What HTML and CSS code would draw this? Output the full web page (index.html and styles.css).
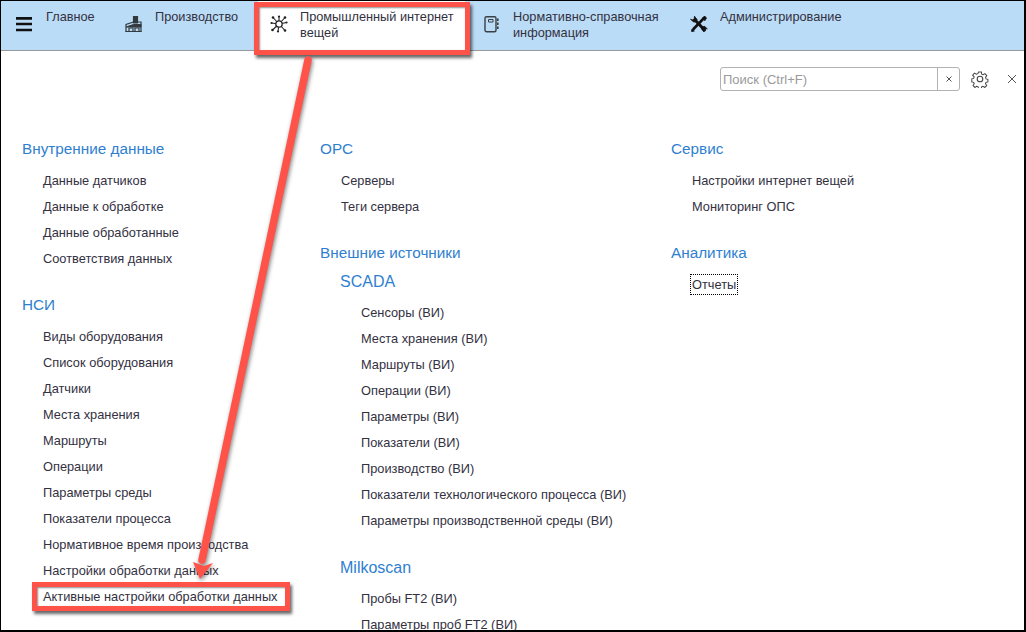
FILE: index.html
```html
<!DOCTYPE html>
<html lang="ru">
<head>
<meta charset="utf-8">
<title>Промышленный интернет вещей</title>
<link rel="stylesheet" href="styles.css">
</head>
<body>
<div class="frame">
  <header class="topbar">
    <div class="tab tab-main">
      <svg class="ico" width="18" height="18" viewBox="0 0 18 18"><path d="M0 3.300h16M0 9h16M0 15h16" stroke="#111" stroke-width="2.700"/></svg>
      <span class="tab-label">Главное</span>
    </div>
    <div class="tab tab-prod">
      <svg class="ico" width="18" height="18" viewBox="0 0 18 18" fill="none" stroke="#33393f" stroke-width="1.200"><path d="M9.500 8V1.500h4V8z" fill="#33393f"/><path d="M2 16.500V9.500l7.500-2.500h7.500v9.500z"/><path d="M2 12l7.500-2.500h7.500v2.500z" fill="#33393f" stroke-width="1"/><path d="M1.500 16.500h16M5 16.500v-3.500h4v3.500M11 16.500v-3.500h4v3.500"/></svg>
      <span class="tab-label">Производство</span>
    </div>
    <div class="tab tab-iot">
      <svg class="ico" width="18" height="18" viewBox="0 0 18 18" fill="none" stroke="#222" stroke-width="1.100"><path d="M9 9L3 2.500M9 9L9 1.500M9 9L15 2.500M9 9L1.500 8M9 9L16.500 7.500M9 9L2.500 15M9 9L8 16.500M9 9L15 15.500"/><circle cx="9" cy="9" r="3.200" fill="#fff" stroke-width="1.300"/><g fill="#222" stroke="none"><circle cx="3" cy="2.500" r="1.300"/><circle cx="9" cy="1.500" r="1.100"/><circle cx="15" cy="2.500" r="1.300"/><circle cx="1.500" cy="8" r="1.100"/><circle cx="16.500" cy="7.500" r="1.100"/><circle cx="2.500" cy="15" r="1.300"/><circle cx="8" cy="16.500" r="1.100"/><circle cx="15" cy="15.500" r="1.300"/></g></svg>
      <span class="tab-label">Промышленный интернет вещей</span>
    </div>
    <div class="tab tab-nsi">
      <svg class="ico" width="16" height="18" viewBox="0 0 16 18" fill="none" stroke="#3a3f45" stroke-width="1.400"><rect x="1" y="1.700" width="11" height="15" rx="1.500"/><path d="M4.500 4.500h4.500v2.500H4.500z" stroke-width="1"/><path d="M13.800 3.500v2.500M13.800 7.500v2.500M13.800 11.500v2.500" stroke-width="1.600"/></svg>
      <span class="tab-label">Нормативно-справочная информация</span>
    </div>
    <div class="tab tab-admin">
      <svg class="ico" width="18" height="18" viewBox="0 0 18 18" fill="#111" stroke="#111" stroke-linecap="round"><path d="M5 5L14.500 15" stroke-width="3" fill="none"/><path d="M14.500 2.500L3.500 14" stroke-width="2.600" fill="none"/><path d="M0.800 4.500L4 7.300L7.200 4.800L4.500 1.200L4.200 3.800L3 4.800z" stroke-width=".8"/><path d="M17 13.500L14 11L11.500 14L14 17L14.300 14.800L15.500 14z" stroke-width=".8"/><path d="M12.500 3L15 1.500L16.500 3L15 5.500z" stroke-width=".8"/><path d="M1.700 16.200L2 14L4 15.700z" stroke-width="1"/></svg>
      <span class="tab-label">Администрирование</span>
    </div>
  </header>
  <div class="tools">
    <div class="search">
      <span class="search-text">Поиск (Ctrl+F)</span>
      <span class="search-clear"><svg width="6" height="6" viewBox="0 0 6 6"><path d="M.5.500l5 5M5.500.500l-5 5" stroke="#555" stroke-width="1"/></svg></span>
    </div>
    <svg class="gear" width="18" height="18" viewBox="0 0 18 18" fill="none" stroke="#444" stroke-width="1.100"><circle cx="9" cy="9" r="2.800"/><path d="M7.500 1.500h3l.4 2.300 1.500.7 2-1.200 2 2.200-1.300 1.900.5 1.600 2 .5v2.800l-2 .5-.6 1.500 1.300 2-2.100 2-2-1.200-1.400.6-.4 2.300h-3l-.4-2.300-1.500-.6-2 1.200-2-2 1.200-2-.6-1.500-2-.5V9l2-.5.6-1.600L1 5l2-2.200 2 1.200 1.600-.7z" transform="translate(.7 .6) scale(.92)"/></svg>
    <svg class="close" width="16" height="16" viewBox="0 0 16 16"><path d="M4 4l8 8M12 4l-8 8" stroke="#555" stroke-width="1"/></svg>
  </div>
  <main class="columns">
    <section class="col col-1">
      <h2 class="sec">Внутренние данные</h2>
      <ul class="links">
        <li>Данные датчиков</li>
        <li>Данные к обработке</li>
        <li>Данные обработанные</li>
        <li>Соответствия данных</li>
      </ul>
      <h2 class="sec">НСИ</h2>
      <ul class="links">
        <li>Виды оборудования</li>
        <li>Список оборудования</li>
        <li>Датчики</li>
        <li>Места хранения</li>
        <li>Маршруты</li>
        <li>Операции</li>
        <li>Параметры среды</li>
        <li>Показатели процесса</li>
        <li>Нормативное время производства</li>
        <li>Настройки обработки данных</li>
        <li>Активные настройки обработки данных</li>
      </ul>
    </section>
    <section class="col col-2">
      <h2 class="sec">OPC</h2>
      <ul class="links">
        <li>Серверы</li>
        <li>Теги сервера</li>
      </ul>
      <h2 class="sec">Внешние источники</h2>
      <div class="sub">
        <h3 class="sec sec-sub">SCADA</h3>
        <ul class="links">
          <li>Сенсоры (ВИ)</li>
          <li>Места хранения (ВИ)</li>
          <li>Маршруты (ВИ)</li>
          <li>Операции (ВИ)</li>
          <li>Параметры (ВИ)</li>
          <li>Показатели (ВИ)</li>
          <li>Производство (ВИ)</li>
          <li>Показатели технологического процесса (ВИ)</li>
          <li>Параметры производственной среды (ВИ)</li>
        </ul>
        <h3 class="sec sec-sub">Milkoscan</h3>
        <ul class="links">
          <li>Пробы FT2 (ВИ)</li>
          <li>Параметры проб FT2 (ВИ)</li>
        </ul>
      </div>
    </section>
    <section class="col col-3">
      <h2 class="sec">Сервис</h2>
      <ul class="links">
        <li>Настройки интернет вещей</li>
        <li>Мониторинг ОПС</li>
      </ul>
      <h2 class="sec">Аналитика</h2>
      <ul class="links">
        <li><span class="focused">Отчеты</span></li>
      </ul>
    </section>
  </main>
  <div class="callout callout-top"></div>
  <div class="callout callout-bottom"></div>
  <svg class="arrow" width="1026" height="632" viewBox="0 0 1026 632">
    <path d="M308 60L202 560" stroke="#ff5349" stroke-width="7.500" stroke-linecap="round" fill="none"/>
    <path d="M193 562L204 566L213 563L200 579Z" fill="#ff5349"/>
  </svg>
</div>
</body>
</html>
```
FILE: styles.css
```css
* { box-sizing: border-box; }
html, body { margin: 0; padding: 0; }
body { width: 1026px; height: 632px; overflow: hidden; background: #fff; font-family: "Liberation Sans", Arial, sans-serif; }
.frame { position: relative; width: 1026px; height: 632px; border-style: solid; border-color: #000; border-width: 1px 2px 2px 1px; overflow: hidden; background: #fff; }
.topbar { display: flex; height: 50px; background: #bbdcf7; border-bottom: 1px solid #9a9a9a; }
.tab { display: flex; align-items: flex-start; font-size: 12.750px; line-height: 16px; color: #33313f; padding-top: 8px; }
.tab .ico { flex: none; margin-top: 6px; }
.tab-main { width: 123px; padding-left: 15px; }
.tab-main .tab-label { margin-left: 12px; }
.tab-prod { width: 134px; }
.tab-prod .tab-label { margin-left: 13px; }
.tab-iot { width: 207px; padding-left: 12px; background: #fff; }
.tab-iot .tab-label { margin-left: 12px; width: 170px; }
.tab-nsi { width: 225px; padding-left: 19px; }
.tab-nsi .tab-label { margin-left: 13px; width: 170px; }
.tab-admin .tab-label { margin-left: 12px; }
.tools { display: flex; align-items: center; justify-content: flex-end; height: 28px; margin-top: 14px; padding-right: 4px; }
.search { display: flex; width: 240px; height: 24px; border: 1px solid #b2b2b2; border-radius: 3px; font-size: 13px; line-height: 23px; color: #9a9a9a; }
.search-text { flex: 1; padding-left: 2px; }
.search-clear { display: flex; align-items: center; justify-content: center; width: 22px; border-left: 1px solid #b2b2b2; }
.gear { margin-left: 11px; }
.close { margin-left: 15px; }
.columns { display: flex; margin-top: 46px; }
.col-1 { width: 319px; padding-left: 21px; }
.col-2 { width: 351px; }
.sec { margin: 0; font-weight: 400; font-size: 15.300px; line-height: 20px; color: #2f7fd0; }
.links { list-style: none; margin: 9px 0 0; padding: 0 0 0 21px; font-size: 12.800px; line-height: 26px; color: #33313f; }
.links + .sec { margin-top: 23px; }
.links li { height: 26px; white-space: nowrap; }
.sub { padding-left: 20px; margin-top: 9px; }
.sec-sub { font-size: 16px; }
.sec-sub + .links { margin-top: 8px; }
.links + .sec-sub { margin-top: 24px; }
.focused { outline: 1px dotted #000; padding: 2px 1px; margin-left: -1px; }
.callout { position: absolute; border: 5px solid #ff5349; box-shadow: 2px 3px 3px rgba(0,0,0,.6), inset 1px 1px 2px rgba(0,0,0,.45); }
.callout-top { left: 253px; top: 1px; width: 216px; height: 53px; }
.callout-bottom { left: 31px; top: 581px; width: 258px; height: 29px; }
.arrow { position: absolute; left: -1px; top: -1px; pointer-events: none; filter: drop-shadow(1px 2px 2px rgba(0,0,0,.5)); }
```
